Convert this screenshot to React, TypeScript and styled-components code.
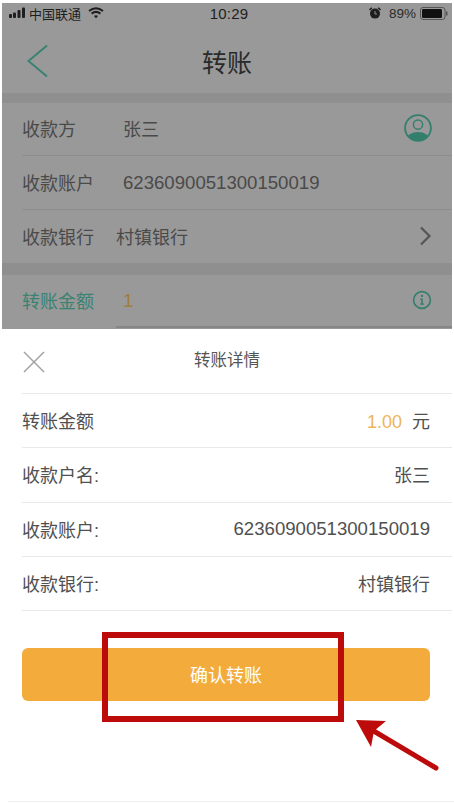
import React from "react";
import styled, { createGlobalStyle } from "styled-components";

const Global = createGlobalStyle`
  html, body { margin: 0; padding: 0; background: #fff; }
  body { font-family: "Liberation Sans", "Noto Sans CJK SC", sans-serif; }
`;

const Page = styled.div`
  position: relative;
  width: 454px;
  height: 804px;
  overflow: hidden;
  background: #fff;
  padding: 3px 2px 0 2px;
  box-sizing: border-box;
`;

const Dimmed = styled.div`
  height: 326px;
  background: #999;
  display: flex;
  flex-direction: column;
`;

const StatusBar = styled.div`
  height: 22px;
  padding: 0 4px 2px 6px;
  box-sizing: border-box;
  display: flex;
  align-items: center;
  color: #1e1e1e;
  font-size: 13px;
  position: relative;
`;

const StatusLeft = styled.div`
  display: flex;
  align-items: center;
  gap: 3px;
  flex: 1;
  font-size: 13px;
`;

const StatusTime = styled.div`
  flex: none;
  width: 64px;
  text-align: center;
  font-size: 15px;
  letter-spacing: 0.2px;
  margin-right: 0;
  margin-left: 2px;
`;

const StatusRight = styled.div`
  flex: 1;
  display: flex;
  align-items: center;
  justify-content: flex-end;
  gap: 4px;
  font-size: 13.5px;
  color: #2a2a2a;
`;

const NavBar = styled.div`
  height: 68px;
  display: flex;
  align-items: center;
  justify-content: center;
  position: relative;
`;

const BackIcon = styled.svg`
  position: absolute;
  left: 24px;
  top: 19px;
`;

const NavTitle = styled.div`
  font-size: 25px;
  color: #2a2a2a;
  margin-top: 4px;
`;

const Band = styled.div<{ $h: number }>`
  height: ${(p) => p.$h}px;
  background: #8f8f8f;
  flex: none;
`;

const DimRow = styled.div<{ $h: number; $line?: boolean }>`
  height: ${(p) => p.$h}px;
  margin-left: 20px;
  padding: 0 20px 2px 0;
  box-sizing: border-box;
  display: flex;
  align-items: center;
  flex: none;
  border-bottom: ${(p) => (p.$line ? "1px solid #8d8d8d" : "0")};
`;

const DimLabel = styled.div<{ $accent?: boolean }>`
  width: 101px;
  flex: none;
  font-size: 18px;
  color: ${(p) => (p.$accent ? "#3a8272" : "#4a4a4a")};
`;

const DimValue = styled.div<{ $shift?: number; $accent?: boolean; $num?: boolean }>`
  flex: 1;
  font-size: ${(p) => (p.$num ? 18.6 : 18)}px;
  color: ${(p) => (p.$accent ? "#a07c40" : "#4a4a4a")};
  margin-left: ${(p) => p.$shift ?? 0}px;
  margin-top: ${(p) => (p.$num ? 2 : 0)}px;
`;

const AmountRule = styled.div`
  height: 2px;
  margin-left: 114px;
  background: #868686;
  flex: none;
  margin-top: -1px;
`;

const Sheet = styled.div`
  display: flex;
  flex-direction: column;
`;

const SheetHeader = styled.div`
  height: 64px;
  position: relative;
  display: flex;
  align-items: center;
  justify-content: center;
  box-sizing: border-box;
`;

const CloseIcon = styled.svg`
  position: absolute;
  left: 21px;
  top: 22px;
`;

const SheetTitle = styled.div`
  font-size: 16.5px;
  color: #555;
  margin-top: -4px;
`;

const SheetRow = styled.div<{ $h: number }>`
  height: ${(p) => p.$h}px;
  margin-left: 20px;
  padding: 0 22px 2px 0;
  box-sizing: border-box;
  display: flex;
  align-items: center;
  justify-content: space-between;
  border-top: 1px solid #e9e9e9;
`;

const SheetLabel = styled.div`
  font-size: 18px;
  color: #505050;
`;

const SheetValue = styled.div<{ $num?: boolean }>`
  font-size: ${(p) => (p.$num ? 18.6 : 18)}px;
  color: #505050;
  display: flex;
  align-items: baseline;
  gap: 10px;
`;

const Amount = styled.span`
  color: #f0b45c;
  font-size: 18px;
`;

const BottomLine = styled.div`
  height: 1px;
  margin-left: 20px;
  background: #e9e9e9;
`;

const ConfirmButton = styled.button`
  display: block;
  margin: 37px 0 0 20px;
  width: 408px;
  height: 53px;
  border: 0;
  border-radius: 6px;
  background: #f3ac3c;
  color: #fff;
  font-family: inherit;
  font-size: 18px;
  padding: 0 0 2px;
`;

const Footer = styled.div`
  position: absolute;
  left: 8px;
  right: 0;
  top: 801px;
  height: 1px;
  background: #eeeeee;
`;

const Highlight = styled.div`
  position: absolute;
  left: 102px;
  top: 632px;
  width: 242px;
  height: 90px;
  box-sizing: border-box;
  border: 6px solid #bd0a0a;
`;

const Arrow = styled.svg`
  position: absolute;
  left: 350px;
  top: 712px;
`;

const Signal = () => (
  <svg width="18" height="12" viewBox="0 0 18 12">
    <rect x="1" y="7" width="3" height="4" rx="1" fill="#1e1e1e" />
    <rect x="5" y="5.5" width="3" height="5.5" rx="1" fill="#1e1e1e" />
    <rect x="9.5" y="3" width="3" height="8" rx="1" fill="#1e1e1e" />
    <rect x="14" y="0.5" width="3" height="10.5" rx="1" fill="#1e1e1e" />
  </svg>
);

const Wifi = () => (
  <svg width="16" height="12" viewBox="0 0 16 12" style={{ marginLeft: 4 }}>
    <path d="M1 4 Q8 -1.5 15 4" fill="none" stroke="#1e1e1e" strokeWidth="2" />
    <path d="M3.6 6.6 Q8 3.2 12.4 6.6" fill="none" stroke="#1e1e1e" strokeWidth="2" />
    <path d="M6 9 Q8 7.6 10 9 L8 11.2 Z" fill="#1e1e1e" />
  </svg>
);

const Alarm = () => (
  <svg width="14" height="14" viewBox="0 0 14 14" style={{ marginRight: 3 }}>
    <circle cx="7" cy="7.6" r="5" fill="#1e1e1e" />
    <path d="M1 3.4 L3.2 1.2 L4.4 2.2 L2 4.6 Z M13 3.4 L10.8 1.2 L9.6 2.2 L12 4.6 Z" fill="#1e1e1e" />
    <path d="M7 5 V8 H9" fill="none" stroke="#999" strokeWidth="0.9" />
  </svg>
);

const Battery = () => (
  <svg width="28" height="13" viewBox="0 0 28 13">
    <rect x="0.5" y="0.5" width="24.5" height="12" rx="2.5" fill="none" stroke="#555" />
    <rect x="2" y="2" width="20" height="9" rx="1.2" fill="#111" />
    <rect x="26" y="4.5" width="1.5" height="4" fill="#555" />
  </svg>
);

const Avatar = () => (
  <svg width="28" height="28" viewBox="0 0 28 28">
    <defs>
      <clipPath id="avatarClip">
        <circle cx="14" cy="14" r="12.6" />
      </clipPath>
    </defs>
    <circle cx="14" cy="14" r="12.9" fill="none" stroke="#337f6d" strokeWidth="1.8" />
    <circle cx="14" cy="10.6" r="4.6" fill="none" stroke="#337f6d" strokeWidth="1.4" />
    <ellipse cx="14" cy="26" rx="11.5" ry="8" fill="#337f6d" clipPath="url(#avatarClip)" />
  </svg>
);

const Chevron = () => (
  <svg width="14" height="20" viewBox="0 0 14 20" style={{ marginRight: -2 }}>
    <path d="M1 1.5 L9.5 10 L1 18.5" fill="none" stroke="#555" strokeWidth="2.2" />
  </svg>
);

const Info = () => (
  <svg width="20" height="20" viewBox="0 0 20 20">
    <circle cx="10" cy="10" r="8.4" fill="none" stroke="#337f6d" strokeWidth="1.6" />
    <circle cx="10" cy="5.9" r="1.2" fill="#337f6d" />
    <path d="M8.2 8.6 H10.8 V13.6 H12 V14.8 H8 V13.6 H9.2 V9.8 H8.2 Z" fill="#337f6d" />
  </svg>
);

const details: [string, string, boolean][] = [
  ["收款户名:", "张三", false],
  ["收款账户:", "6236090051300150019", true],
  ["收款银行:", "村镇银行", false],
];

export default function App() {
  return (
    <Page>
      <Global />
      <Dimmed>
        <StatusBar>
          <StatusLeft>
            <Signal />
            <span>中国联通</span>
            <Wifi />
          </StatusLeft>
          <StatusTime>10:29</StatusTime>
          <StatusRight>
            <Alarm />
            <span>89%</span>
            <Battery />
          </StatusRight>
        </StatusBar>
        <NavBar>
          <BackIcon width="24" height="34" viewBox="0 0 24 34">
            <path d="M21 1.5 L2.5 17 L21 32.5" fill="none" stroke="#3a8272" strokeWidth="2" />
          </BackIcon>
          <NavTitle>转账</NavTitle>
        </NavBar>
        <Band $h={10} />
        <DimRow $h={53} $line>
          <DimLabel>收款方</DimLabel>
          <DimValue>张三</DimValue>
          <Avatar />
        </DimRow>
        <DimRow $h={54} $line>
          <DimLabel>收款账户</DimLabel>
          <DimValue $num>6236090051300150019</DimValue>
        </DimRow>
        <DimRow $h={53}>
          <DimLabel>收款银行</DimLabel>
          <DimValue $shift={-7}>村镇银行</DimValue>
          <Chevron />
        </DimRow>
        <Band $h={12} />
        <DimRow $h={52}>
          <DimLabel $accent>转账金额</DimLabel>
          <DimValue $accent $num>1</DimValue>
          <Info />
        </DimRow>
        <AmountRule />
      </Dimmed>
      <Sheet>
        <SheetHeader>
          <CloseIcon width="22" height="22" viewBox="0 0 22 22">
            <path d="M1 1 L21 21 M21 1 L1 21" fill="none" stroke="#a3a3a3" strokeWidth="1.5" />
          </CloseIcon>
          <SheetTitle>转账详情</SheetTitle>
        </SheetHeader>
        <SheetRow $h={54}>
          <SheetLabel>转账金额</SheetLabel>
          <SheetValue>
            <Amount>1.00</Amount>
            <span>元</span>
          </SheetValue>
        </SheetRow>
        {details.map(([label, value, num], i) => (
          <SheetRow key={label} $h={i === 0 ? 55 : 54}>
            <SheetLabel>{label}</SheetLabel>
            <SheetValue $num={num}>{value}</SheetValue>
          </SheetRow>
        ))}
        <BottomLine />
        <ConfirmButton>确认转账</ConfirmButton>
      </Sheet>
      <Footer />
      <Highlight />
      <Arrow width="95" height="62" viewBox="0 0 95 62">
        <path d="M6 8 L36 9 L24 19 L21 35 Z" fill="#bd0a0a" />
        <path d="M22 18 L86 56" stroke="#bd0a0a" strokeWidth="5" strokeLinecap="round" fill="none" />
      </Arrow>
    </Page>
  );
}
